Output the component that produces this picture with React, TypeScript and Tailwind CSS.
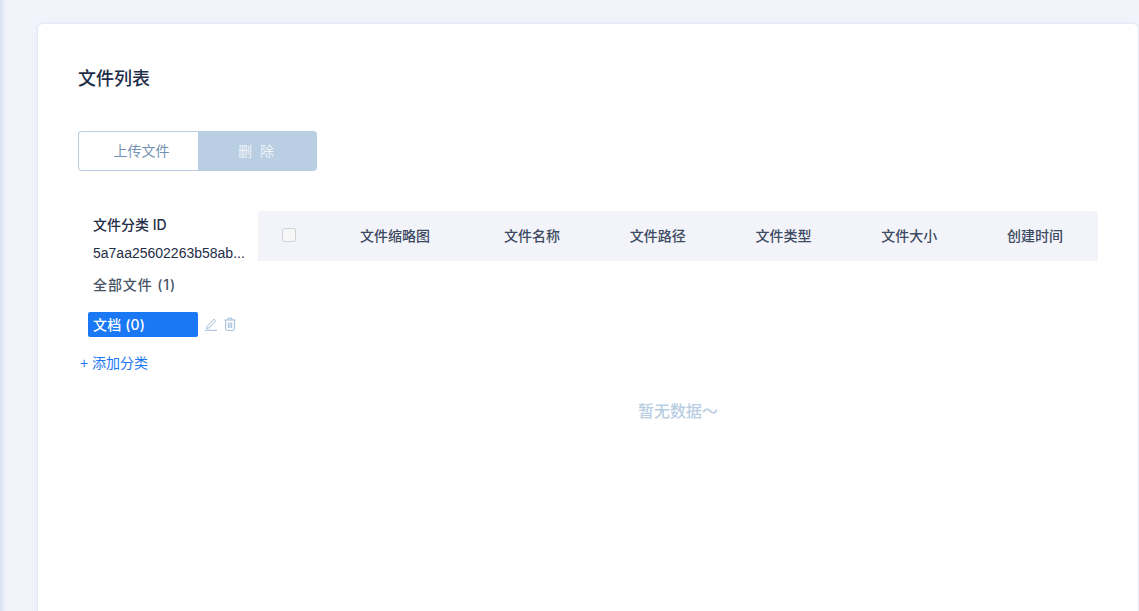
import React from "react";

const FONT = "font-['Liberation_Sans','Noto_Sans_CJK_SC',sans-serif]";
const LABEL = "font-['Inter','Noto_Sans_CJK_SC',sans-serif]";
const cols = ["文件名称", "文件路径", "文件类型", "文件大小", "创建时间"];

export default function App() {
  return (
    <div className={`${FONT} relative h-[611px] w-[1139px] overflow-hidden bg-[#f1f3fb] pl-[38px] pt-[24px]`}>
      <div className="absolute inset-y-0 left-0 w-[6px] bg-gradient-to-r from-[#d9e3f2] to-[#f1f3fb]" />
      <div className="h-[600px] w-[1100px] rounded-[5px] bg-white pl-[40px] pr-[40px] pt-[42px] shadow-[0_0_3px_#c9d9ee]">
        <h1 className="text-[18px] font-medium leading-[26px] text-[#1f2d47]">文件列表</h1>

        <div className="mt-[39px] flex h-[40px] w-[239px] text-[14px]">
          <button className="h-full w-[120px] rounded-l-[4px] border border-r-0 border-[#b9cee2] bg-white pl-[6px] text-[#7493b3]">上传文件</button>
          <button className="h-full w-[119px] rounded-r-[4px] bg-[#b9cee2] pr-[1px] tracking-[2px] text-[#eef3f8]">删 除</button>
        </div>

        <div className="mt-[40px] flex">
          <aside className="w-[180px] shrink-0">
            <div className={`${LABEL} pl-[15px] text-[14px] font-medium leading-[28px] text-[#1f2d47]`}>文件分类 ID</div>
            <div className="pl-[15px] text-[14px] leading-[28px] whitespace-nowrap text-[#1f2d47]">5a7aa25602263b58ab...</div>
            <div className={`${LABEL} mt-[4px] pl-[15px] text-[14px] font-medium leading-[28px] tracking-[0.9px] text-[#4a5568]`}>全部文件 (1)</div>
            <div className="mt-[13px] flex items-center">
              <div className={`${LABEL} ml-[10px] h-[25px] w-[110px] rounded-[2px] bg-[#1a78f5] pl-[5px] text-[14px] font-medium leading-[26px] tracking-[0.15px] text-white`}>文档 (0)</div>
              <svg className="mb-[2px] ml-[6px]" width="14" height="14" viewBox="0 0 14 14" fill="none" stroke="#9fbcd8" strokeWidth="1">
                <path d="M3 9.5 9.8 2.2l1.8 1.6L4.8 11l-2.2.6zM1 13.3h12" />
              </svg>
              <svg className="mb-[2px] ml-[5px]" width="14" height="14" viewBox="0 0 14 14" fill="none" stroke="#9fbcd8" strokeWidth="1">
                <path d="M1.5 3h11M5 3V1.2h4V3M2.6 3v9.2c0 .7.4 1.2 1.1 1.2h6.6c.7 0 1.1-.5 1.1-1.2V3M5.3 5.5v5.5M7 5.5v5.5M8.7 5.5v5.5" />
              </svg>
            </div>
            <div className="mt-[13px] pl-[2px] text-[14px] leading-[26px] text-[#1a78f5]">+ 添加分类</div>
          </aside>

          <div className="w-[840px]">
            <div className="grid h-[50px] grid-cols-[63px_148px_repeat(5,1fr)] items-center rounded-t-[3px] bg-[#f3f4f9] text-center text-[14px] font-medium text-[#3d4a63]">
              <div className="flex justify-center pb-[3px] pr-[1px]">
                <span className="h-[14px] w-[14px] rounded-[2px] border border-[#cfd3da] bg-[#f7f7f7]" />
              </div>
              <div>文件缩略图</div>
              {cols.map((c) => (
                <div key={c}>{c}</div>
              ))}
            </div>
            <div className="pt-[139px] text-center text-[16px] font-medium leading-[24px] text-[#b9cee2]">暂无数据～</div>
          </div>
        </div>
      </div>
    </div>
  );
}
